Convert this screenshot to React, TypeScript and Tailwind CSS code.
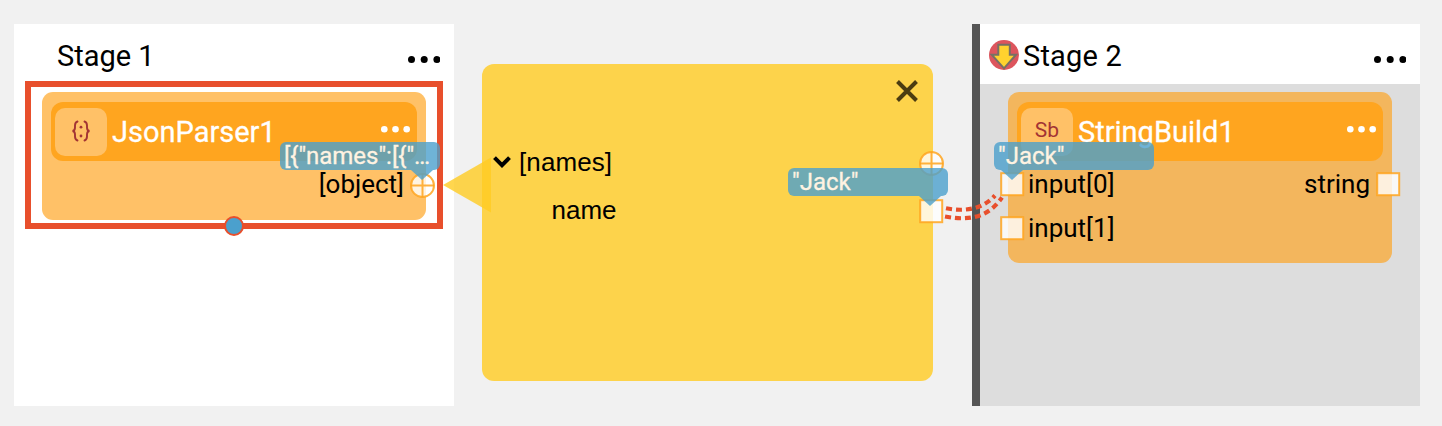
import React from 'react';

const Dots = ({ gap, r, className }: { gap: number; r: number; className: string }) => (
  <svg width={gap * 2 + r * 2} height={r * 2} className={className} fill="currentColor">
    <circle cx={r} cy={r} r={r} />
    <circle cx={r + gap} cy={r} r={r} />
    <circle cx={r + gap * 2} cy={r} r={r} />
  </svg>
);

const ObjectPort = ({ className }: { className: string }) => (
  <svg width="26" height="26" viewBox="0 0 26 26" className={`absolute ${className}`} stroke="#ffa51f" strokeOpacity=".85" strokeWidth="2" fill="none">
    <circle cx="12.500" cy="12.500" r="11.5" fill="#fff" fillOpacity=".8" />
    <path d="M12.500 1v23M1 12.500h23" />
  </svg>
);

const Port = ({ className }: { className: string }) => (
  <svg width="26" height="26" viewBox="0 0 26 26" className={`absolute ${className}`}>
    <rect x="1.200" y="1.200" width="22" height="22" fill="#fff" fillOpacity=".8" stroke="#ffa51f" strokeOpacity=".85" strokeWidth="2" />
  </svg>
);

const Bubble = ({ text, tail, className }: { text: string; tail: string; className: string }) => (
  <div className={`absolute h-7 w-40 rounded-md bg-[#4ba0cd]/80 px-1 ${className}`}>
    <div className="whitespace-nowrap text-[24px] leading-7 text-[#fff3e2] [-webkit-text-stroke:0.3px_#fff3e2]">{text}</div>
    <svg width="22" height="10" className={`absolute top-full ${tail}`}>
      <path d="M0 0h22L11 10z" fill="#4ba0cd" fillOpacity=".8" />
    </svg>
  </div>
);

const NodeHeader = ({ icon, title }: { icon: React.ReactNode; title: string }) => (
  <div className="mx-[9px] flex h-[59px] items-center rounded-xl bg-[#ffa51f] pl-1">
    <div className="flex h-12 w-[52px] items-center justify-center rounded-[10px] bg-[#ffc167] pb-0.5 text-[21px] text-[#a33434]">{icon}</div>
    <span className="mt-0.5 ml-[5px] text-[29px] leading-none text-white [-webkit-text-stroke:0.3px_white]">{title}</span>
    <Dots gap={11.2} r={3.3} className="mr-[7px] mb-1 ml-auto text-white" />
  </div>
);

export default function App() {
  return (
    <div className="relative flex h-[426px] w-[1442px] justify-between overflow-hidden bg-[#f1f1f1] py-5 pt-6 pr-[22px] pl-3.5 font-['Roboto',sans-serif] text-black">
      <section className="h-[382px] w-[440px] bg-white">
        <header className="flex h-[60px] items-center pr-3.5 pl-[43px]">
          <span className="mt-1 text-[29px] leading-none">Stage 1</span>
          <Dots gap={12.7} r={3.5} className="mt-[11px] ml-auto" />
        </header>
        <div className="relative -mt-[3px] ml-[11px] h-[148px] w-[418px] border-[6px] border-[#e84f2c] pt-[5px] pl-[11px]">
          <div className="h-32 w-96 rounded-[11px] bg-[#ffc167] pt-2.5">
            <NodeHeader
              title="JsonParser1"
              icon={
                <svg width="20" height="22" viewBox="0 0 20 22" fill="none" stroke="#a33434" strokeWidth="1.9" strokeLinecap="round">
                  <path d="M6.500 1.500C4.600 2.200 4 3.600 4 5.500V7.500C4 9.500 3.200 10.800 1.500 11 3.200 11.200 4 12.500 4 14.500v2c0 1.900.6 3.300 2.500 4M13.500 1.500c1.900.7 2.500 2.100 2.500 4v2c0 2 .8 3.300 2.500 3.500-1.700.2-2.500 1.500-2.500 3.500v2c0 1.900-.6 3.300-2.500 4" />
                  <circle cx="10" cy="7.200" r="1.400" fill="#a33434" stroke="none" />
                  <circle cx="10" cy="16" r="1.400" fill="#a33434" stroke="none" />
                </svg>
              }
            />
            <div className="flex h-[47px] items-center justify-end pr-[22px] text-[26px]">[object]</div>
          </div>
          <span className="absolute -bottom-[13px] left-[193px] size-5 rounded-full border-2 border-[#e84f2c] bg-[#4ba0cd]" />
        </div>
      </section>

      <section className="h-[382px] w-[448px] border-l-8 border-[#555] bg-[#ddd]">
        <header className="flex h-[60px] items-center bg-white pr-3.5 pl-[9px]">
          <svg width="30" height="30" viewBox="0 0 30 30" className="mt-0.5">
            <circle cx="15" cy="15" r="15" fill="#dd555d" />
            <path d="M9.300 4.700h11.500v10H27L15 28.300 2.700 14.700h6.600z" fill="#ffd22e" stroke="#777065" strokeWidth="2" />
          </svg>
          <span className="mt-1 ml-1 text-[29px] leading-none tracking-[0.2px]">Stage 2</span>
          <Dots gap={12.7} r={3.5} className="mt-[11px] ml-auto" />
        </header>
        <div className="mt-2 ml-7 h-[171px] w-96 rounded-[11px] bg-[#f3b65d] pt-2.5">
          <NodeHeader title="StringBuild1" icon="Sb" />
          <div className="flex h-[47px] items-center justify-between pr-[22px] pl-5 text-[26px]">
            <span>input[0]</span>
            <span>string</span>
          </div>
          <div className="flex h-10 items-center pl-5 text-[26px]">input[1]</div>
        </div>
      </section>

      <section className="absolute top-16 left-[482px] h-[317px] w-[451px] rounded-xl bg-[#fdd34b] pt-[83px] font-['Liberation_Sans',sans-serif] text-[26px]">
        <svg width="24" height="24" viewBox="0 0 24 24" className="absolute top-[15px] right-[14px]" stroke="#4b3c11" strokeWidth="4">
          <path d="M2.500 2.500l19 19M21.500 2.500l-19 19" />
        </svg>
        <div className="flex h-[30px] items-center pl-[11px]">
          <svg width="18" height="12" viewBox="0 0 18 12" fill="none" stroke="#000" strokeWidth="4">
            <path d="M1.500 1.700L9 9.200l7.500-7.500" />
          </svg>
          <span className="ml-2 tracking-[0.1px]">[names]</span>
        </div>
        <div className="mt-[18px] flex h-[30px] items-center pl-[69.5px]">name</div>
      </section>
      <svg width="49" height="56" className="absolute top-[157px] left-[442px]">
        <path d="M1 28L49 .5v55z" fill="#fc2" fillOpacity=".8" />
      </svg>

      <ObjectPort className="top-[173px] left-[410px]" />
      <ObjectPort className="top-[151px] left-[919px]" />
      <Port className="top-[199px] left-[919px]" />
      <Port className="top-[172px] left-[1000px]" />
      <Port className="top-[216px] left-[1000px]" />
      <Port className="top-[172px] left-[1376px]" />
      <svg width="70" height="40" viewBox="940 185 70 40" className="absolute top-[185px] left-[940px]" fill="none" stroke="#e84f2c" strokeWidth="4.200" strokeDasharray="6 4">
        <path d="M946 208.300C965 212 983 209 995 195.500" />
        <path d="M945 216.500C972 221.500 989 216 1002 197.500" />
      </svg>
      <Bubble text={'[{"names":[{"…'} className="top-[142px] left-[280px]" tail="left-[131px]" />
      <Bubble text={'"Jack"'} className="top-[168px] left-[788px]" tail="left-[131px]" />
      <Bubble text={'"Jack"'} className="top-[142px] left-[994px]" tail="left-[7px]" />
    </div>
  );
}
